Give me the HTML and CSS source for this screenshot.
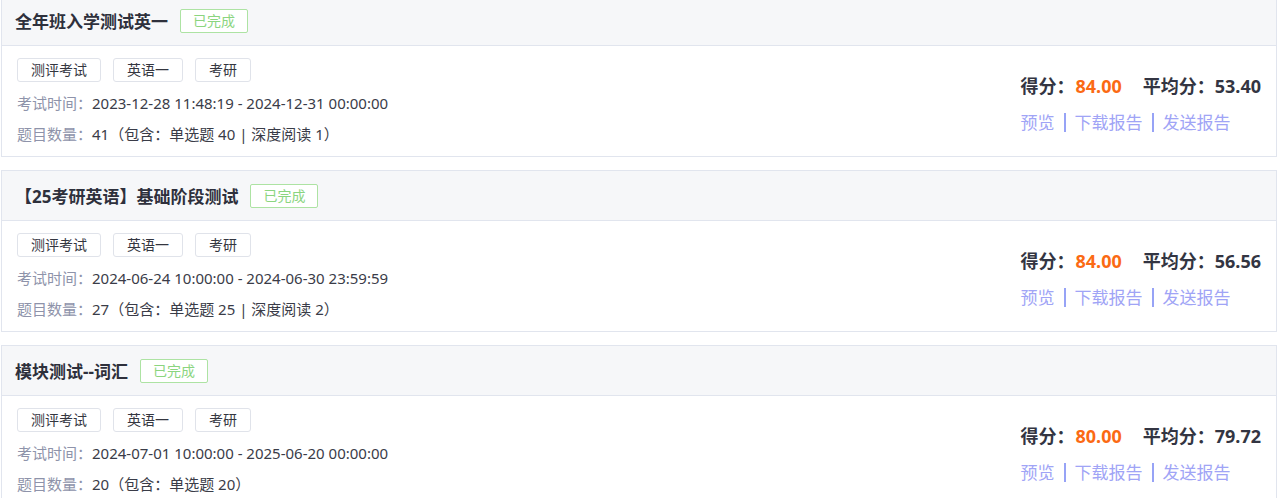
FILE: index.html
```html
<!DOCTYPE html>
<html lang="zh-CN">
<head>
<meta charset="utf-8">
<title>考试列表</title>
<link rel="stylesheet" href="styles.css">
</head>
<body>
<div class="list">
  <div class="card">
    <div class="card-head">
      <span class="title">全年班入学测试英一</span>
      <span class="badge">已完成</span>
    </div>
    <div class="card-body">
      <div class="info">
        <div class="tags"><span class="tag">测评考试</span><span class="tag">英语一</span><span class="tag">考研</span></div>
        <div class="row"><span class="label">考试时间：</span>2023-12-28 11:48:19 - 2024-12-31 00:00:00</div>
        <div class="row"><span class="label">题目数量：</span>41（包含：单选题 40 | 深度阅读 1）</div>
      </div>
      <div class="side">
        <div class="score"><span class="lbl">得分：</span><span class="num">84.00</span><span class="avg">平均分：53.40</span></div>
        <div class="links"><span>预览</span><i class="sep"></i><span>下载报告</span><i class="sep"></i><span>发送报告</span></div>
      </div>
    </div>
  </div>
  <div class="card">
    <div class="card-head">
      <span class="title">【25考研英语】基础阶段测试</span>
      <span class="badge">已完成</span>
    </div>
    <div class="card-body">
      <div class="info">
        <div class="tags"><span class="tag">测评考试</span><span class="tag">英语一</span><span class="tag">考研</span></div>
        <div class="row"><span class="label">考试时间：</span>2024-06-24 10:00:00 - 2024-06-30 23:59:59</div>
        <div class="row"><span class="label">题目数量：</span>27（包含：单选题 25 | 深度阅读 2）</div>
      </div>
      <div class="side">
        <div class="score"><span class="lbl">得分：</span><span class="num">84.00</span><span class="avg">平均分：56.56</span></div>
        <div class="links"><span>预览</span><i class="sep"></i><span>下载报告</span><i class="sep"></i><span>发送报告</span></div>
      </div>
    </div>
  </div>
  <div class="card">
    <div class="card-head">
      <span class="title">模块测试--词汇</span>
      <span class="badge">已完成</span>
    </div>
    <div class="card-body">
      <div class="info">
        <div class="tags"><span class="tag">测评考试</span><span class="tag">英语一</span><span class="tag">考研</span></div>
        <div class="row"><span class="label">考试时间：</span>2024-07-01 10:00:00 - 2025-06-20 00:00:00</div>
        <div class="row"><span class="label">题目数量：</span>20（包含：单选题 20）</div>
      </div>
      <div class="side">
        <div class="score"><span class="lbl">得分：</span><span class="num">80.00</span><span class="avg">平均分：79.72</span></div>
        <div class="links"><span>预览</span><i class="sep"></i><span>下载报告</span><i class="sep"></i><span>发送报告</span></div>
      </div>
    </div>
  </div>
</div>
</body>
</html>
```

FILE: styles.css
```css
html, body {
  margin: 0;
  padding: 0;
  background: #ffffff;
}
body {
  font-family: "Noto Sans", "Noto Sans CJK SC", sans-serif;
  color: #33353f;
  overflow: hidden;
}
.list {
  margin-top: -5px;
  padding: 0 3px 0 1px;
  display: flex;
  flex-direction: column;
  gap: 13px;
}
.card {
  border: 1px solid #e1e5ee;
  background: #fff;
}
.card-head {
  height: 49px;
  background: #f6f7f9;
  border-bottom: 1px solid #e1e5ee;
  display: flex;
  align-items: center;
  padding-left: 13px;
  gap: 12px;
}
.title {
  font-size: 17px;
  font-weight: 700;
  color: #2e303c;
}
.badge {
  height: 22px;
  line-height: 22px;
  padding: 0 12px;
  border: 1px solid #ade3a3;
  border-radius: 2px;
  font-size: 14px;
  color: #8bd57f;
  background: #ffffff;
}
.card-body {
  height: 110px;
  box-sizing: border-box;
  padding: 12px 15px 9px 15px;
  display: flex;
  justify-content: space-between;
  align-items: center;
}
.info {
  display: flex;
  flex-direction: column;
  align-self: flex-start;
}
.tags {
  display: flex;
  gap: 12px;
}
.tag {
  height: 22px;
  line-height: 22px;
  padding: 0 13px;
  border: 1px solid #e0e3ea;
  border-radius: 3px;
  font-size: 14px;
  color: #34363f;
}
.row {
  height: 24px;
  line-height: 24px;
  margin-top: 7px;
  font-size: 15px;
  color: #3a3c48;
}
.tags + .row {
  margin-top: 9px;
}
.label {
  color: #8e93aa;
}
.side {
  display: flex;
  flex-direction: column;
  padding-top: 3px;
}
.score {
  height: 26px;
  line-height: 26px;
  font-size: 18px;
  font-weight: 700;
  color: #333542;
  display: flex;
}
.lbl {
  margin-right: 1px;
}
.num {
  color: #fb6a14;
}
.avg {
  margin-left: 21px;
}
.links {
  margin-top: 11px;
  height: 26px;
  line-height: 26px;
  font-size: 17px;
  color: #a0a4f6;
  display: flex;
  align-items: center;
}
.sep {
  display: inline-block;
  width: 2px;
  height: 19px;
  margin: 0 9px;
  background: #97a3f6;
}
```
